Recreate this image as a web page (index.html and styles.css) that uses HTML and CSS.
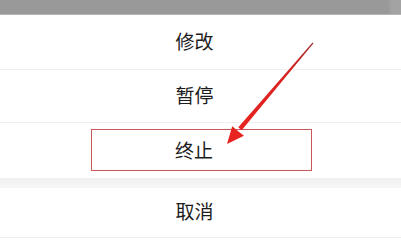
FILE: index.html
```html
<!DOCTYPE html>
<html lang="zh">
<head>
<meta charset="utf-8">
<link rel="stylesheet" href="styles.css">
</head>
<body>
<div class="screen">
  <div class="topbar"></div>
  <div class="sheet">
    <div class="item item-first"><span class="label">修改</span></div>
    <div class="item item-second"><span class="label">暂停</span></div>
    <div class="item item-third"><span class="highlight"><span class="label">终止</span></span></div>
    <div class="gap"></div>
    <div class="item item-cancel"><span class="label">取消</span></div>
  </div>
  <svg class="arrow" width="401" height="240" viewBox="0 0 401 240">
    <defs>
      <linearGradient id="shaft" x1="313" y1="43" x2="240" y2="129" gradientUnits="userSpaceOnUse">
        <stop offset="0" stop-color="#9a2a2a"/>
        <stop offset="0.3" stop-color="#d42020"/>
        <stop offset="1" stop-color="#e82420"/>
      </linearGradient>
    </defs>
    <polygon points="313.5,43.3 312.6,42.6 238.3,127.2 241.7,130.2" fill="url(#shaft)"/>
    <polygon points="227,144 232.2,126.2 238.5,131.4 244,135.8" fill="#e82420"/>
  </svg>
</div>
</body>
</html>
```
FILE: styles.css
```css
html, body {
  margin: 0;
  padding: 0;
  background: #ffffff;
}
.screen {
  position: relative;
  width: 401px;
  height: 240px;
  overflow: hidden;
  font-family: "Noto Sans CJK SC", "Noto Sans", sans-serif;
  color: #1c1c1c;
}
.topbar {
  height: 14px;
  background: linear-gradient(to right, #999999 0, #999999 388px, #a3a3a3 392px, #a3a3a3 100%);
  border-bottom: 1px solid #b5b5b5;
}
.sheet {
  display: flex;
  flex-direction: column;
}
.item {
  display: flex;
  align-items: center;
  justify-content: center;
  font-size: 19px;
  line-height: 1;
  border-bottom: 1px solid #efefef;
  box-sizing: border-box;
  padding-bottom: 4px;
}
.label {
  display: block;
  margin-right: 12px;
}
.item-first {
  height: 55px;
  padding-bottom: 3px;
}
.item-second {
  height: 53px;
}
.item-third {
  height: 55px;
  border-bottom: none;
  padding-bottom: 2px;
}
.highlight {
  display: flex;
  align-items: center;
  justify-content: center;
  width: 221px;
  height: 42px;
  box-sizing: border-box;
  border: 1.5px solid #c9575a;
  margin-left: 1px;
  padding-bottom: 0;
}
.highlight .label {
  margin-right: 14px;
}
.gap {
  height: 10px;
  background: linear-gradient(to bottom, #f0f0f0, #f6f6f6);
}
.item-cancel {
  height: 50px;
  border-bottom: 1px solid #eeeeee;
}
.arrow {
  position: absolute;
  left: 0;
  top: 0;
}
```
